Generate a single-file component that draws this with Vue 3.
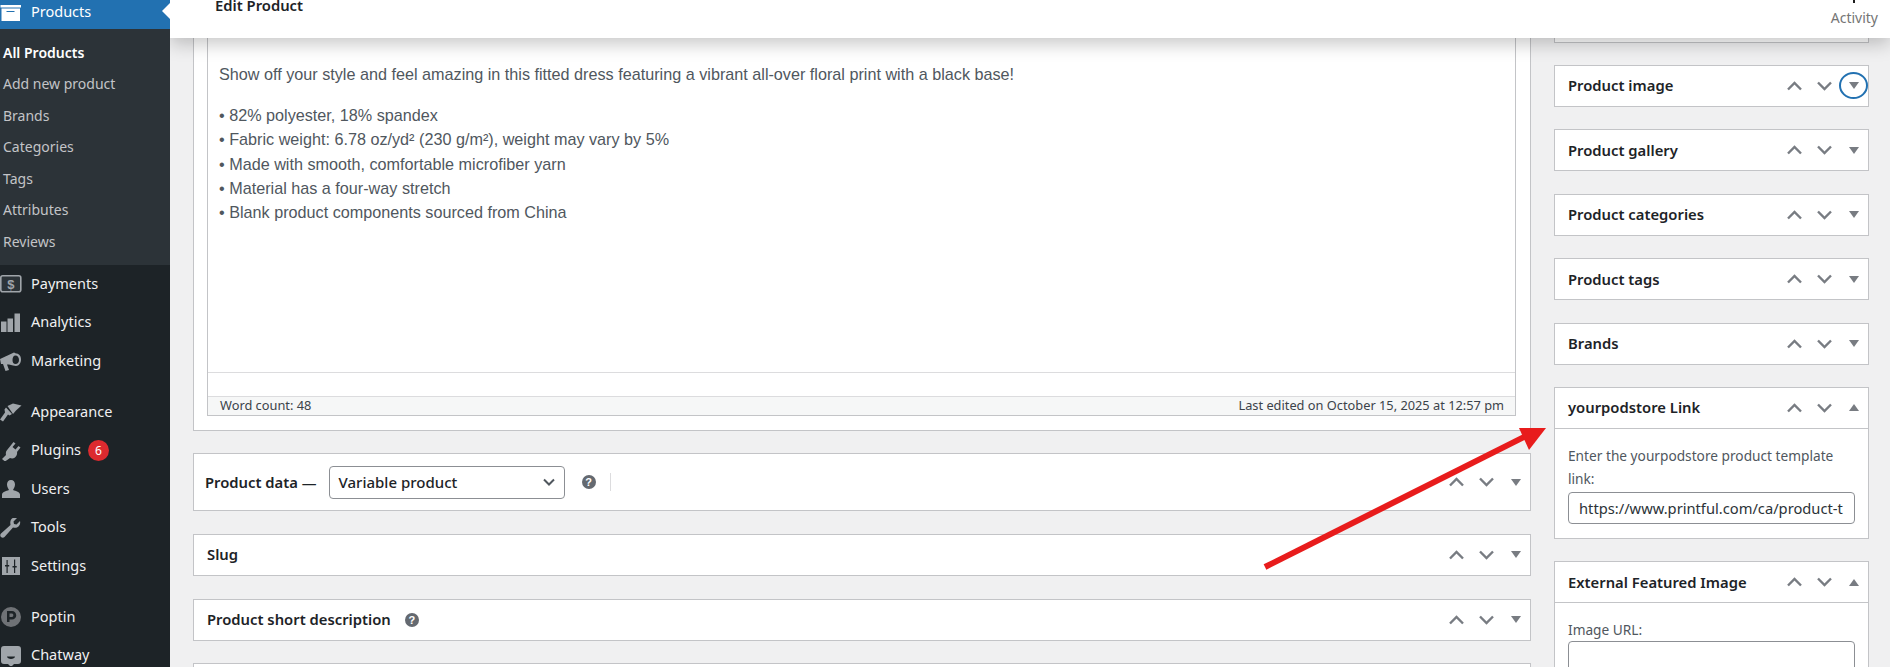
<script setup>
const subItems = ['Add new product', 'Brands', 'Categories', 'Tags', 'Attributes', 'Reviews']
const group1 = ['Payments', 'Analytics', 'Marketing']
const group2 = ['Appearance', 'Plugins', 'Users', 'Tools', 'Settings']
const group3 = ['Poptin', 'Chatway']
const bullets = [
  '• 82% polyester, 18% spandex',
  '• Fabric weight: 6.78 oz/yd² (230 g/m²), weight may vary by 5%',
  '• Made with smooth, comfortable microfiber yarn',
  '• Material has a four-way stretch',
  '• Blank product components sourced from China'
]
const sideBoxes = [
  { title: 'Product image', focus: true },
  { title: 'Product gallery' },
  { title: 'Product categories' },
  { title: 'Product tags' },
  { title: 'Brands' }
]
</script>

<template>
  <div class="page">
    <aside class="sidebar">
      <div class="current">
        <svg class="icon" viewBox="0 0 22 20" width="22" height="20">
          <path fill="#fff" fill-rule="evenodd" d="M0.500 3h20.500v2.500H0.500zM1.500 6.500h18.500V19H1.500zM6.500 9v1h8V9z" />
        </svg>
        <span>Products</span>
        <i class="notch"></i>
      </div>
      <nav class="submenu">
        <a class="sub active">All Products</a>
        <a v-for="s in subItems" :key="s" class="sub">{{ s }}</a>
      </nav>
      <div class="group">
        <a v-for="g in group1" :key="g" class="item">
          <svg class="icon" viewBox="0 0 22 20" width="22" height="20">
            <template v-if="g === 'Payments'">
              <rect x="0.800" y="1.800" width="20" height="16" rx="2" fill="#2c3338" stroke="#a0a5aa" stroke-width="1.600" />
              <text x="10.800" y="14.800" text-anchor="middle" font-size="13" font-weight="700" font-family="Liberation Sans, sans-serif" fill="#a0a5aa">$</text>
            </template>
            <path v-else-if="g === 'Analytics'" fill="#a0a5aa" d="M1 8.500h5.500V19H1zM7.500 5.500H13V19H7.500zM14.500 0.500H20V19h-5.500z" />
            <path v-else fill="#a0a5aa" fill-rule="evenodd" d="M0 8l14-6.500 2 1c3 0 5 2.500 5 6s-2 6.500-5 6.500l-3-.5-4-1-2 0 2 5.500-3.500 1-2.500-7L1 13zM15.500 4.500c-2 0-3 2-3 4.500s1 4 3 4 3.500-1.500 3.500-4-1.500-4.500-3.500-4.500z" />
          </svg>
          <span>{{ g }}</span>
        </a>
      </div>
      <div class="group">
        <a v-for="g in group2" :key="g" class="item">
          <svg class="icon" viewBox="0 0 22 20" width="22" height="20">
            <path v-if="g === 'Appearance'" fill="#a0a5aa" d="M7.500 3L13 0.500 21.500 2.500 16 7.500 13 11zM6 4.500l6 6.500-2.500 1.500L8 11.500 3 18.500 0 16.500 5 9.500 4.500 6.500z" />
            <path v-else-if="g === 'Plugins'" fill="#a0a5aa" d="M13.500 1l2 1.500-3 3.500 3 2.500 3-3.500 2 1.500-3.500 4.500c.5 2-.5 4.500-2 5.500-2 1.500-4 1-5 .5L5 20.500l-3-2.500 4-4c-.5-2 0-4 1.500-5.500z" />
            <path v-else-if="g === 'Users'" fill="#a0a5aa" d="M11 1c2.500 0 4 2 4 4.500S13.500 10 13 11c3 1 7 2 7 4.500V19H2v-3.500C2 13 6 12 9 11c-.5-1-2-3-2-5.500S8.500 1 11 1z" />
            <path v-else-if="g === 'Tools'" fill="#a0a5aa" d="M20 3l-3.500 3.500-2.500-.5-.5-2.500L17 0c-3-1-6 0-6.500 3-.5 2 0 3 0 4L1 15.500c-1 1-1 2.500 0 3.500s2.500 1 3.500 0L13 9.500c2 .5 4 .5 5.500-1 1.500-1.500 2-3.500 1.500-5.500z" />
            <path v-else fill="#a0a5aa" fill-rule="evenodd" d="M2 1h18v18H2zM6.500 4v5H5v1.500h1.500V17h1.200v-6.500h1.500V9H7.700V4zM14 3.500v6.500h-1.500v1.500H14V17h1.200v-5.500h1.500V10h-1.500V3.500z" />
          </svg>
          <span>{{ g }}</span>
          <b v-if="g === 'Plugins'" class="badge">6</b>
        </a>
      </div>
      <div class="group">
        <a v-for="g in group3" :key="g" class="item">
          <svg class="icon" viewBox="0 0 22 20" width="22" height="20">
            <path v-if="g === 'Poptin'" fill="#6f7276" fill-rule="evenodd" d="M11 0a10 10 0 1 1 0 20 10 10 0 0 1 0-20zM7 15h2.500v-2.500H12a4.200 4.200 0 0 0 0-8.500H7zM9.500 6.500H12a1.800 1.800 0 0 1 0 3.500H9.500z" />
            <path v-else fill="#a0a5aa" fill-rule="evenodd" d="M4 0h14a3 3 0 0 1 3 3v12a3 3 0 0 1-3 3h-4l-3 3-3-3H4a3 3 0 0 1-3-3V3a3 3 0 0 1 3-3zM7 10.500c0 1.500 2 2.500 4 2.500s4-1 4-2.500z" />
          </svg>
          <span>{{ g }}</span>
        </a>
      </div>
    </aside>

    <div class="wrap">
      <header class="topbar">
        <h1>Edit Product</h1>
        <div class="activity"><i class="activity-mark"></i><span>Activity</span></div>
      </header>

      <div class="columns">
        <main class="left">
          <section class="box editor-box">
            <div class="editor">
              <div class="editor-text">
                <p>Show off your style and feel amazing in this fitted dress featuring a vibrant all-over floral print with a black base!</p>
                <p class="list"><span v-for="b in bullets" :key="b">{{ b }}</span></p>
              </div>
              <div class="editor-gap"></div>
              <div class="status">
                <span>Word count: 48</span>
                <span>Last edited on October 15, 2025 at 12:57 pm</span>
              </div>
            </div>
          </section>

          <section class="box head data-head">
            <span class="title-data">Product data —</span>
            <div class="select">
              <span>Variable product</span>
              <svg viewBox="0 0 12 8" width="12" height="8"><path d="M1 1.500l5 5 5-5" fill="none" stroke="#50575e" stroke-width="2" /></svg>
            </div>
            <i class="help">?</i>
            <i class="divider"></i>
            <div class="controls">
              <svg viewBox="0 0 15 10" width="15" height="10"><path d="M1 8.500L7.500 2 14 8.500" fill="none" stroke="#787c82" stroke-width="2.400" /></svg>
              <svg viewBox="0 0 15 10" width="15" height="10"><path d="M1 1.500L7.500 8 14 1.500" fill="none" stroke="#787c82" stroke-width="2.400" /></svg>
              <svg viewBox="0 0 10 7" width="10" height="7"><path d="M0 0h10L5 7z" fill="#787c82" /></svg>
            </div>
          </section>

          <section class="box head slug">
            <span class="title">Slug</span>
            <div class="controls">
              <svg viewBox="0 0 15 10" width="15" height="10"><path d="M1 8.500L7.500 2 14 8.500" fill="none" stroke="#787c82" stroke-width="2.400" /></svg>
              <svg viewBox="0 0 15 10" width="15" height="10"><path d="M1 1.500L7.500 8 14 1.500" fill="none" stroke="#787c82" stroke-width="2.400" /></svg>
              <svg viewBox="0 0 10 7" width="10" height="7"><path d="M0 0h10L5 7z" fill="#787c82" /></svg>
            </div>
          </section>

          <section class="box head">
            <span class="title">Product short description</span>
            <i class="help short-help">?</i>
            <div class="controls">
              <svg viewBox="0 0 15 10" width="15" height="10"><path d="M1 8.500L7.500 2 14 8.500" fill="none" stroke="#787c82" stroke-width="2.400" /></svg>
              <svg viewBox="0 0 15 10" width="15" height="10"><path d="M1 1.500L7.500 8 14 1.500" fill="none" stroke="#787c82" stroke-width="2.400" /></svg>
              <svg viewBox="0 0 10 7" width="10" height="7"><path d="M0 0h10L5 7z" fill="#787c82" /></svg>
            </div>
          </section>

          <section class="box tail"></section>
        </main>

        <aside class="right">
          <section class="box top-stub"></section>

          <section v-for="b in sideBoxes" :key="b.title" class="box head side-head">
            <span class="title">{{ b.title }}</span>
            <div class="controls">
              <svg viewBox="0 0 15 10" width="15" height="10"><path d="M1 8.500L7.500 2 14 8.500" fill="none" stroke="#787c82" stroke-width="2.400" /></svg>
              <svg viewBox="0 0 15 10" width="15" height="10"><path d="M1 1.500L7.500 8 14 1.500" fill="none" stroke="#787c82" stroke-width="2.400" /></svg>
              <svg viewBox="0 0 10 7" width="10" height="7"><path d="M0 0h10L5 7z" fill="#787c82" /></svg>
              <i v-if="b.focus" class="ring"></i>
            </div>
          </section>

          <section class="box">
            <div class="head side-head inner-head">
              <span class="title">yourpodstore Link</span>
              <div class="controls">
                <svg viewBox="0 0 15 10" width="15" height="10"><path d="M1 8.500L7.500 2 14 8.500" fill="none" stroke="#787c82" stroke-width="2.400" /></svg>
                <svg viewBox="0 0 15 10" width="15" height="10"><path d="M1 1.500L7.500 8 14 1.500" fill="none" stroke="#787c82" stroke-width="2.400" /></svg>
                <svg viewBox="0 0 10 7" width="10" height="7"><path d="M0 7h10L5 0z" fill="#787c82" /></svg>
              </div>
            </div>
            <div class="side-body">
              <p>Enter the yourpodstore product template link:</p>
              <div class="field">https://www.printful.com/ca/product-t</div>
            </div>
          </section>

          <section class="box">
            <div class="head side-head inner-head">
              <span class="title">External Featured Image</span>
              <div class="controls">
                <svg viewBox="0 0 15 10" width="15" height="10"><path d="M1 8.500L7.500 2 14 8.500" fill="none" stroke="#787c82" stroke-width="2.400" /></svg>
                <svg viewBox="0 0 15 10" width="15" height="10"><path d="M1 1.500L7.500 8 14 1.500" fill="none" stroke="#787c82" stroke-width="2.400" /></svg>
                <svg viewBox="0 0 10 7" width="10" height="7"><path d="M0 7h10L5 0z" fill="#787c82" /></svg>
              </div>
            </div>
            <div class="side-body second">
              <p>Image URL:</p>
              <div class="field tall"></div>
            </div>
          </section>
        </aside>
      </div>

      <svg class="arrow" viewBox="0 0 300 160" width="300" height="160">
        <path d="M5 149L272 15" stroke="#e81c1c" stroke-width="6" fill="none" />
        <path d="M286 10H259L269 32z" fill="#e81c1c" />
      </svg>
    </div>
  </div>
</template>

<style scoped>
.page {
  display: flex;
  width: 1890px;
  height: 667px;
  overflow: hidden;
  background: #f0f0f1;
  font-family: "Noto Sans", sans-serif;
  color: #1d2327;
}
.sidebar {
  position: relative;
  z-index: 3;
  width: 170px;
  flex: none;
  margin-top: -5px;
  background: #1d2327;
  font-size: 14.500px;
  color: #f0f0f1;
}
.icon {
  flex: none;
}
.current {
  position: relative;
  display: flex;
  align-items: center;
  gap: 9px;
  height: 34px;
  background: #2271b1;
  color: #fff;
}
.current span {
  padding-bottom: 3px;
}
.notch {
  position: absolute;
  right: 0;
  top: 8px;
  border: 8px solid transparent;
  border-right-color: #fff;
  border-left-width: 0;
}
.submenu {
  display: flex;
  flex-direction: column;
  padding: 7.500px 0 7.500px;
  background: #2c3338;
}
.sub {
  height: 31.600px;
  line-height: 31.600px;
  padding-left: 3px;
  font-size: 14px;
  color: #c3c4c7;
}
.sub.active {
  color: #fff;
  font-weight: 600;
}
.group {
  display: flex;
  flex-direction: column;
  margin-bottom: 13px;
}
.item {
  display: flex;
  align-items: center;
  gap: 9px;
  height: 38.400px;
}
.item span {
  padding-bottom: 3px;
}
.badge {
  display: grid;
  place-items: center;
  width: 21px;
  height: 21px;
  margin-left: -2px;
  border-radius: 50%;
  background: #dc2a2f;
  color: #fff;
  font-size: 12px;
  font-weight: 400;
}
.wrap {
  position: relative;
  flex: 1;
  min-width: 0;
}
.topbar {
  position: absolute;
  z-index: 2;
  top: 0;
  left: 0;
  right: 0;
  height: 38px;
  display: flex;
  justify-content: space-between;
  background: #fff;
  box-shadow: 0 6px 18px rgba(0, 0, 0, 0.22);
}
.topbar h1 {
  margin: -6px 0 0 45px;
  font-size: 14.800px;
  line-height: 22px;
  font-weight: 600;
  height: 22px;
}
.activity {
  display: flex;
  flex-direction: column;
  align-items: center;
  padding-right: 12px;
  color: #757575;
  font-size: 14px;
  line-height: 18px;
}
.activity-mark {
  width: 2px;
  height: 3px;
  margin: 0 0 6px;
  background: #1e1e1e;
}
.columns {
  display: flex;
  gap: 23px;
  margin-top: -10px;
  padding: 0 21px 0 23px;
}
.left {
  flex: 1;
  min-width: 0;
  display: flex;
  flex-direction: column;
  gap: 22.600px;
}
.right {
  width: 315px;
  flex: none;
  display: flex;
  flex-direction: column;
  gap: 22.400px;
}
.box {
  background: #fff;
  border: 1px solid #c3c4c7;
}
.editor-box {
  padding: 0 14px 14px 13px;
}
.editor {
  border: 1px solid #c3c4c7;
  border-top: 0;
}
.editor-text {
  height: 382px;
  padding: 71px 11px 0;
  border-bottom: 1px solid #dcdcde;
  box-sizing: border-box;
  font-family: "Liberation Sans", Arial, sans-serif;
  font-size: 16.200px;
  line-height: 24.200px;
  color: #50575e;
}
.editor-text p {
  margin: 0 0 17px;
}
.list span {
  display: block;
}
.editor-gap {
  height: 23px;
}
.status {
  display: flex;
  justify-content: space-between;
  height: 18px;
  padding: 0 11px 0 12px;
  border-top: 1px solid #dcdcde;
  background: #f6f7f7;
  font-size: 12.800px;
  line-height: 17px;
  color: #3c434a;
}
.head {
  display: flex;
  align-items: center;
  height: 42px;
  box-sizing: border-box;
}
.data-head {
  height: 58px;
  margin-top: -0.600px;
  padding-left: 11px;
}
.slug {
  height: 42.400px;
}
.title-data {
  padding-bottom: 1px;
  font-size: 14.800px;
  font-weight: 600;
  white-space: nowrap;
}
.title {
  padding: 0 0 1px 13px;
  font-size: 14.800px;
  font-weight: 600;
  white-space: nowrap;
}
.select {
  display: flex;
  align-items: center;
  justify-content: space-between;
  box-sizing: border-box;
  width: 236px;
  height: 33px;
  margin-left: 12px;
  padding: 0 9px;
  border: 1px solid #8c8f94;
  border-radius: 4px;
  font-size: 15px;
  font-weight: 500;
}
.help {
  display: grid;
  place-items: center;
  width: 14px;
  height: 14px;
  margin-left: 17px;
  border-radius: 50%;
  background: #646970;
  color: #fff;
  font-family: "Liberation Sans", sans-serif;
  font-size: 11px;
  font-weight: 700;
  font-style: normal;
}
.short-help {
  margin-left: 14px;
}
.divider {
  width: 1px;
  height: 18px;
  margin-left: 14px;
  background: #dcdcde;
}
.controls {
  position: relative;
  display: grid;
  grid-template-columns: repeat(3, 30px);
  place-items: center;
  margin-left: auto;
  margin-right: -1px;
}
.ring {
  position: absolute;
  right: 1px;
  top: 50%;
  width: 29px;
  height: 27px;
  box-sizing: border-box;
  margin-top: -14px;
  border: 2px solid #2271b1;
  border-radius: 50%;
}
.tail {
  height: 40px;
}
.top-stub {
  height: 50.600px;
}
.inner-head {
  height: 41px;
  border-bottom: 1px solid #c3c4c7;
}
.side-body {
  padding: 15.500px 13px 14px;
  font-size: 13.700px;
  line-height: 23px;
  color: #50575e;
}
.side-body p {
  margin: 0 0 1.500px;
}
.side-body.second {
  padding-top: 15px;
}
.side-body.second p {
  margin: 0;
}
.field {
  box-sizing: border-box;
  height: 32px;
  padding: 0 10px;
  overflow: hidden;
  white-space: nowrap;
  border: 1px solid #8c8f94;
  border-radius: 4px;
  line-height: 30px;
  font-size: 14.700px;
  color: #2c3338;
}
.field.tall {
  height: 40px;
}
.arrow {
  position: absolute;
  z-index: 1;
  left: 1090px;
  top: 418px;
}
</style>

<style>
html, body {
  margin: 0;
  overflow: hidden;
}
</style>
